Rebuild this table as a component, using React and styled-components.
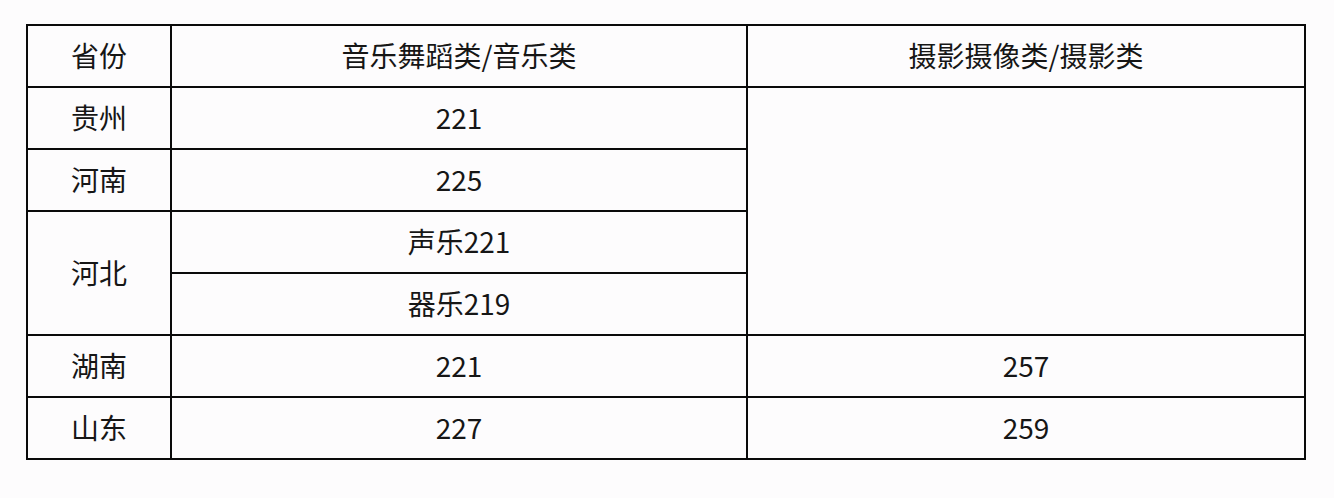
import styled, { createGlobalStyle } from "styled-components";

const GlobalStyle = createGlobalStyle`
  html, body {
    margin: 0;
    padding: 0;
    background: #fdfcfd;
  }
`;

const Page = styled.div`
  padding: 24px 0 0 26px;
  font-family: "Noto Sans CJK SC", "Noto Sans", sans-serif;
`;

const Table = styled.div`
  display: grid;
  width: 1280px;
  box-sizing: border-box;
  grid-template-columns: 142px 574px 556px;
  grid-auto-rows: 60px;
  gap: 2px;
  padding: 2px;
  background: #0a0a0a;
`;

const Cell = styled.div`
  background: #fdfcfd;
  display: flex;
  align-items: center;
  justify-content: center;
  padding-bottom: 3px;
  box-sizing: border-box;
  font-size: 28px;
  color: #161616;
  grid-row: ${(p) => (p.$span ? `span ${p.$span}` : "auto")};
`;

export default function App() {
  return (
    <>
      <GlobalStyle />
      <Page>
        <Table>
          <Cell>省份</Cell>
          <Cell>音乐舞蹈类/音乐类</Cell>
          <Cell>摄影摄像类/摄影类</Cell>

          <Cell>贵州</Cell>
          <Cell>221</Cell>
          <Cell $span={4} />

          <Cell>河南</Cell>
          <Cell>225</Cell>

          <Cell $span={2}>河北</Cell>
          <Cell>声乐221</Cell>
          <Cell>器乐219</Cell>

          <Cell>湖南</Cell>
          <Cell>221</Cell>
          <Cell>257</Cell>

          <Cell>山东</Cell>
          <Cell>227</Cell>
          <Cell>259</Cell>
        </Table>
      </Page>
    </>
  );
}
